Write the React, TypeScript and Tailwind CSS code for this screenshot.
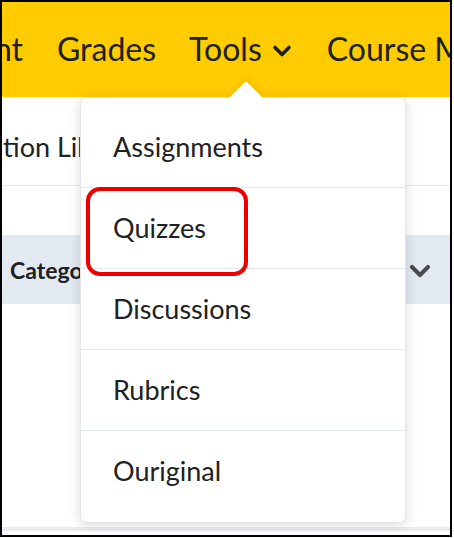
import React from "react";

const Chevron = ({ className }: { className?: string }) => (
  <svg viewBox="0 0 20 14" className={className} fill="none">
    <path d="M3 3.5 L10 10.5 L17 3.5" stroke="currentColor" strokeWidth="3.6" strokeLinecap="round" strokeLinejoin="round" />
  </svg>
);

export default function App() {
  const items = ["Assignments", "Quizzes", "Discussions", "Rubrics", "Ouriginal"];
  return (
    <div className="w-[454px] h-[538px] bg-white relative" style={{ fontFamily: "Lato, 'Noto Sans', sans-serif" }}>
      <div className="w-[452px] h-[537px] border-2 border-black overflow-hidden relative bg-white flex flex-col">
        {/* header */}
        <div className="h-[95px] shrink-0 bg-[#ffcc00] flex items-center text-[#202122] text-[32px] whitespace-nowrap pb-[2px]">
          <span className="w-[21px] overflow-hidden flex justify-end shrink-0">
            <span className="whitespace-nowrap">Content</span>
          </span>
          <span className="ml-[34px]">Grades</span>
          <span className="ml-[33px] flex items-center">
            Tools
            <Chevron className="w-[20px] h-[14px] ml-[10px] mt-[4px] text-[#202122]" />
          </span>
          <span className="ml-[35px]">Course Management</span>
        </div>
        {/* content */}
        <div className="flex-1 flex flex-col bg-white">
          <div className="h-[89px] border-b border-[#e3e9f1] flex items-center text-[27px] text-[#202122] whitespace-nowrap pt-[12px]">
            <span className="ml-[1px]">tion Library</span>
          </div>
          <div className="h-[49px]" />
          <div className="h-[69px] bg-[#e3e9f1] flex items-center justify-between pl-[8px] pr-[18px] pt-[2px]">
            <span className="font-bold text-[23px] text-[#202122]">Category</span>
            <Chevron className="w-[24px] h-[16px] text-[#494c4e]" />
          </div>
          <div className="flex-1" />
          <div className="h-[4px] bg-[#e9ebee] mb-[4px]" />
        </div>

        {/* dropdown menu overlay */}
        <div className="absolute left-[78px] top-[95px] w-[326px] h-[426px] bg-white rounded-[7px] border border-[#e3e5e8] shadow-[0_2px_12px_rgba(0,0,0,0.15)]">
          <div className="absolute left-[153px] top-[-12px] w-[24px] h-[24px] bg-white rotate-45 rounded-[2px] shadow-[-3px_-3px_6px_rgba(0,0,0,0.05)]" />
          <div className="relative pt-[9px] px-0 bg-white rounded-[7px]">
            {items.map((label, i) => (
              <div
                key={label}
                className={`h-[81px] flex items-center pl-[32px] text-[27px] text-[#202122] ${i < items.length - 1 ? "border-b border-[#e3e9f1]" : ""}`}
              >
                {label}
              </div>
            ))}
          </div>
          {/* highlight box */}
          <div className="absolute left-[5px] top-[89px] w-[162px] h-[89px] border-[4px] border-[#ee0000] rounded-[14px]" />
        </div>
      </div>
    </div>
  );
}
